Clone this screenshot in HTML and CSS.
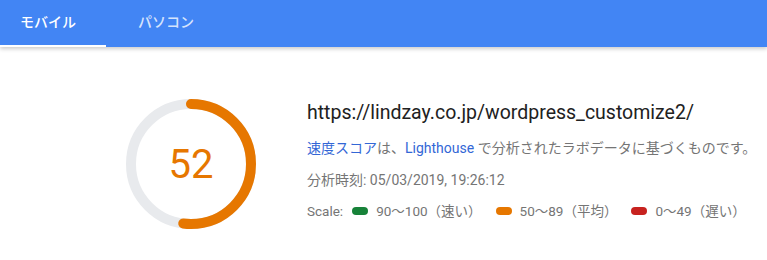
FILE: index.html
```html
<!DOCTYPE html>
<html lang="ja">
<head>
    <meta charset="UTF-8">
    <meta name="viewport" content="width=device-width, initial-scale=1.0">
    <title>PageSpeed Insights</title>
    <link rel="stylesheet" href="styles.css">
</head>
<body>
    <!-- Device tabs -->
    <nav class="tab-bar">
        <div class="tab tab-mobile active">モバイル</div>
        <div class="tab tab-desktop">パソコン</div>
    </nav>

    <!-- Score summary -->
    <div class="summary">
        <div class="gauge">
            <svg class="gauge-ring" viewBox="0 0 130 130" width="130" height="130">
                <circle class="gauge-base" cx="65" cy="65" r="60"></circle>
                <circle class="gauge-arc" cx="65" cy="65" r="60"
                        stroke-dasharray="196.04 376.99" transform="rotate(-90 65 65)"></circle>
            </svg>
            <div class="gauge-score">52</div>
        </div>

        <div class="details">
            <div class="url">https://lindzay.co.jp/wordpress_customize2/</div>
            <p class="note">
                <a href="#">速度スコア</a>は、<a href="#">Lighthouse</a> で分析されたラボデータに基づくものです。
            </p>
            <p class="timestamp">分析時刻: 05/03/2019, 19:26:12</p>
            <div class="scale">
                <span>Scale:</span>
                <span class="legend"><i class="dot fast"></i>90～100（速い）</span>
                <span class="legend"><i class="dot average"></i>50～89（平均）</span>
                <span class="legend"><i class="dot slow"></i>0～49（遅い）</span>
            </div>
        </div>
    </div>
</body>
</html>
```

FILE: styles.css
```css
:root {
    --tab-blue: #4285f4;
    --text-dark: #212121;
    --text-grey: #757575;
    --link-blue: #3367d6;
    --fast: #178239;
    --average: #e67700;
    --slow: #c7221f;
    --ring-grey: #e8eaed;
}

* {
    margin: 0;
    padding: 0;
    box-sizing: border-box;
}

body {
    font-family: Roboto, "Noto Sans CJK JP", sans-serif;
    background: white;
    color: var(--text-dark);
}

.tab-bar {
    display: flex;
    height: 47px;
    background: var(--tab-blue);
    box-shadow: 0 2px 4px rgba(0, 0, 0, 0.2);
}

.tab {
    display: flex;
    align-items: center;
    height: 100%;
    padding-bottom: 3px;
    font-size: 14px;
    font-weight: 500;
    color: rgba(255, 255, 255, 0.8);
    border-bottom: 2px solid transparent;
}

.tab-mobile {
    width: 106px;
    padding-left: 20px;
}

.tab-desktop {
    padding-left: 32px;
}

.tab.active {
    color: white;
    border-bottom-color: white;
}

.summary {
    display: flex;
    align-items: flex-start;
    padding: 52px 0 0 126px;
}

.gauge {
    position: relative;
    width: 130px;
    height: 130px;
    flex-shrink: 0;
}

.gauge-ring circle {
    fill: none;
    stroke-width: 10;
}

.gauge-base {
    stroke: var(--ring-grey);
}

.gauge-arc {
    stroke: var(--average);
    stroke-linecap: round;
}

.gauge-score {
    position: absolute;
    inset: 0;
    display: flex;
    align-items: center;
    justify-content: center;
    font-size: 40px;
    color: var(--average);
}

.details {
    margin-left: 51px;
    padding-top: 2px;
}

.url {
    font-size: 19.5px;
    line-height: 24px;
    color: var(--text-dark);
}

.note {
    margin-top: 13px;
    font-size: 14px;
    line-height: 20px;
    color: var(--text-grey);
}

.note a {
    color: var(--link-blue);
    text-decoration: none;
}

.timestamp {
    margin-top: 12px;
    font-size: 14px;
    line-height: 20px;
    color: var(--text-grey);
}

.scale {
    display: flex;
    align-items: center;
    margin-top: 11px;
    font-size: 13.5px;
    line-height: 20px;
    color: var(--text-grey);
}

.legend {
    display: flex;
    align-items: center;
    margin-left: 9px;
}

.legend + .legend {
    margin-left: 14px;
}

.dot {
    display: inline-block;
    width: 16px;
    height: 8px;
    border-radius: 4px;
    margin-right: 8px;
}

.dot.fast {
    background: var(--fast);
}

.dot.average {
    background: var(--average);
}

.dot.slow {
    background: var(--slow);
}
```
